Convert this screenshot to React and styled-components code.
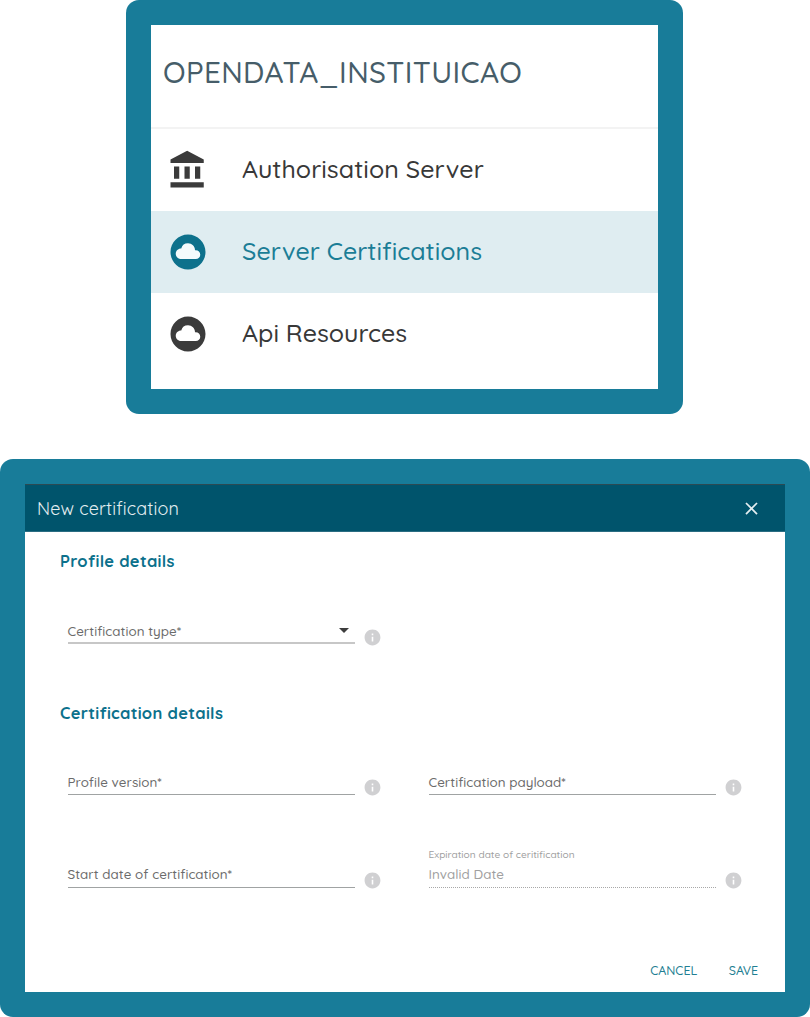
import React from "react";
import styled, { createGlobalStyle } from "styled-components";
import { MdCloudCircle, MdInfo, MdClose } from "react-icons/md";

const GlobalStyle = createGlobalStyle`
  * { box-sizing: border-box; }
  body {
    margin: 0;
    background: #fff;
    font-family: Quicksand, Lato, "Open Sans", sans-serif;
    font-weight: 500;
  }
`;

const Page = styled.main`
  width: 810px;
  height: 1017px;
  display: flex;
  flex-direction: column;
  align-items: center;
  gap: 45px;
`;

const Frame = styled.section`
  width: ${(p) => p.$width}px;
  height: ${(p) => p.$height}px;
  margin-right: ${(p) => p.$offset || 0}px;
  padding: 25px;
  border-radius: 13px;
  background: #187c99;
`;

const Panel = styled.div`
  height: 100%;
  display: flex;
  flex-direction: column;
  background: #fff;
`;

const Label = styled.span`
  display: block;
  white-space: nowrap;
  letter-spacing: ${(p) => p.$track || 0}px;
`;

const MenuTitle = styled.h1`
  margin: 0;
  height: 104.4px;
  padding: 30px 0 0 12px;
  border-bottom: 2px solid #f3f3f3;
  font-size: 29.5px;
  line-height: 34px;
  font-weight: 500;
  color: #465d69;
`;

const MenuItem = styled.div`
  height: 82px;
  padding-left: 16px;
  display: flex;
  align-items: center;
  gap: 33px;
  font-size: 25px;
  line-height: 30px;
  color: ${(p) => (p.$active ? "#1b7d96" : "#383838")};
  background: ${(p) => (p.$active ? "#dfedf1" : "transparent")};

  svg {
    color: ${(p) => (p.$active ? "#0d718c" : "#3b3b3b")};
    background: ${(p) => (p.$active ? "radial-gradient(circle, #f5fbfc 14px, transparent 15px)" : "none")};
  }

  ${Label} {
    padding-bottom: 2px;
  }
`;

const DialogHeader = styled.header`
  height: 48px;
  padding: 1px 23px 0 12px;
  display: flex;
  align-items: center;
  justify-content: space-between;
  border-top: 1px solid #2c4a53;
  border-bottom: 1px solid #2a6d82;
  background: #00546c;
  color: #e4eef1;
  font-size: 18px;
  font-weight: 400;
  line-height: 24px;
`;

const Body = styled.div`
  flex: 1;
  padding: 16px 35px 0;
`;

const Heading = styled.h2`
  margin: ${(p) => p.$top || 0}px 0 0;
  height: 24px;
  padding-top: 1px;
  font-size: 16.5px;
  line-height: 24px;
  font-weight: 700;
  color: #0c718c;
`;

const FieldRow = styled.div`
  display: grid;
  grid-template-columns: 315px 315px;
  column-gap: 46px;
  padding-left: 7.5px;
  margin-top: ${(p) => p.$top}px;
`;

const Field = styled.div`
  display: flex;
  align-items: flex-end;
  height: 45px;
  gap: 8.4px;
`;

const Control = styled.div`
  flex: none;
  width: 287.5px;
  height: 40px;
  margin-bottom: ${(p) => (p.$select ? 3 : 2)}px;
  display: flex;
  flex-direction: column;
  justify-content: flex-end;
  padding-bottom: ${(p) => (p.$select ? 2.5 : 3.5)}px;
  border-bottom: ${(p) =>
    p.$disabled ? "1px dotted #a8a8a8" : p.$select ? "2px solid #c7c7c7" : "1px solid #a0a3a3"};
  font-size: 13.4px;
  line-height: 18px;
  color: ${(p) => (p.$disabled ? "#a0a0a0" : "#6b6b6b")};
`;

const Hint = styled.div`
  font-size: 10.1px;
  line-height: 14px;
  margin-bottom: 3.5px;
  color: #a0a0a0;
`;

const ValueLine = styled.div`
  display: flex;
  justify-content: space-between;
  align-items: center;
  padding-right: 6px;
`;

const Caret = styled.i`
  margin-bottom: 1px;
  border: 5px solid transparent;
  border-top-color: #3d3d3d;
  border-bottom: 0;
`;

const InfoIcon = styled(MdInfo)`
  flex: none;
  color: #d0d0d2;
`;

const Actions = styled.footer`
  display: flex;
  justify-content: flex-end;
  gap: 31.5px;
  padding: 0 27px 13px 0;
  font-size: 12.5px;
  line-height: 18px;
  color: #1f7f93;
`;

function BankIcon({ size }) {
  return (
    <svg width={size} height={size} viewBox="0 0 24 24" fill="currentColor">
      <path d="M4 10v7h3v-7H4zm6 0v7h3v-7h-3zM2 22h19v-3H2v3zm14-12v7h3v-7h-3zm-4.5-9L2 6v2h19V6l-9.5-5z" />
    </svg>
  );
}

const menu = [
  { text: "Authorisation Server", track: 0.04, Icon: BankIcon },
  { text: "Server Certifications", track: 0.03, Icon: MdCloudCircle, active: true },
  { text: "Api Resources", track: 0, Icon: MdCloudCircle },
];

function FormField({ text, hint, select, disabled }) {
  return (
    <Field>
      <Control $disabled={disabled} $select={select}>
        {hint && (
          <Hint>
            <Label>{hint}</Label>
          </Hint>
        )}
        <ValueLine>
          <Label $track={0.03}>{text}</Label>
          {select && <Caret />}
        </ValueLine>
      </Control>
      <InfoIcon size={19} />
    </Field>
  );
}

export default function App() {
  return (
    <>
      <GlobalStyle />
      <Page>
        <Frame $width={557} $height={414} $offset={1}>
          <Panel>
            <MenuTitle>
              <Label $track={0.38}>OPENDATA_INSTITUICAO</Label>
            </MenuTitle>
            {menu.map(({ text, track, Icon, active }) => (
              <MenuItem key={text} $active={active}>
                <Icon size={42} />
                <Label $track={track}>{text}</Label>
              </MenuItem>
            ))}
          </Panel>
        </Frame>
        <Frame $width={810} $height={558}>
          <Panel>
            <DialogHeader>
              <Label $track={0.12}>New certification</Label>
              <MdClose size={21} />
            </DialogHeader>
            <Body>
              <Heading>
                <Label $track={0.3}>Profile details</Label>
              </Heading>
              <FieldRow $top={30}>
                <FormField text="Certification type*" select />
              </FieldRow>
              <Heading $top={52.5}>
                <Label $track={0.3}>Certification details</Label>
              </Heading>
              <FieldRow $top={28.5}>
                <FormField text="Profile version*" />
                <FormField text="Certification payload*" />
              </FieldRow>
              <FieldRow $top={47.5}>
                <FormField text="Start date of certification*" />
                <FormField text="Invalid Date" hint="Expiration date of ceritification" disabled />
              </FieldRow>
            </Body>
            <Actions>
              <Label>CANCEL</Label>
              <Label $track={-0.1}>SAVE</Label>
            </Actions>
          </Panel>
        </Frame>
      </Page>
    </>
  );
}
